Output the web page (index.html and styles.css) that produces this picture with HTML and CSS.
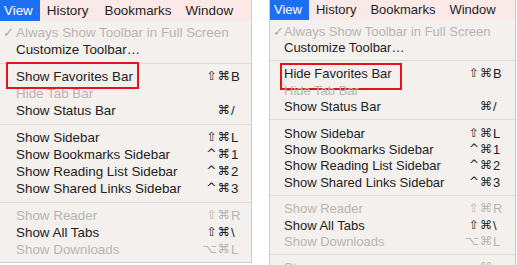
FILE: index.html
```html
<!DOCTYPE html>
<html>
<head>
<meta charset="utf-8">
<link rel="stylesheet" href="styles.css">
</head>
<body>
<div class="page">
  <div class="panel left">
    <div class="menubar">
      <span class="mb-item active">View</span>
      <span class="mb-item">History</span>
      <span class="mb-item">Bookmarks</span>
      <span class="mb-item">Window</span>
    </div>
    <div class="menu">
      <div class="row disabled"><span class="check">✓</span><span class="label">Always Show Toolbar in Full Screen</span></div>
      <div class="row"><span class="check"></span><span class="label">Customize Toolbar…</span></div>
      <div class="sep"></div>
      <div class="row marked"><span class="check"></span><span class="label">Show Favorites Bar</span><span class="sc"><span class="mods">⇧⌘</span><span class="key">B</span></span></div>
      <div class="row disabled"><span class="check"></span><span class="label">Hide Tab Bar</span></div>
      <div class="row"><span class="check"></span><span class="label">Show Status Bar</span><span class="sc"><span class="mods">⌘</span><span class="key">/</span></span></div>
      <div class="sep"></div>
      <div class="row"><span class="check"></span><span class="label">Show Sidebar</span><span class="sc"><span class="mods">⇧⌘</span><span class="key">L</span></span></div>
      <div class="row"><span class="check"></span><span class="label">Show Bookmarks Sidebar</span><span class="sc"><span class="mods">^⌘</span><span class="key">1</span></span></div>
      <div class="row"><span class="check"></span><span class="label">Show Reading List Sidebar</span><span class="sc"><span class="mods">^⌘</span><span class="key">2</span></span></div>
      <div class="row"><span class="check"></span><span class="label">Show Shared Links Sidebar</span><span class="sc"><span class="mods">^⌘</span><span class="key">3</span></span></div>
      <div class="sep"></div>
      <div class="row disabled"><span class="check"></span><span class="label">Show Reader</span><span class="sc"><span class="mods">⇧⌘</span><span class="key">R</span></span></div>
      <div class="row"><span class="check"></span><span class="label">Show All Tabs</span><span class="sc"><span class="mods">⇧⌘</span><span class="key">\</span></span></div>
      <div class="row disabled"><span class="check"></span><span class="label">Show Downloads</span><span class="sc"><span class="mods">⌥⌘</span><span class="key">L</span></span></div>
    </div>
  </div>
  <div class="panel right">
    <div class="menubar">
      <span class="mb-item active">View</span>
      <span class="mb-item">History</span>
      <span class="mb-item">Bookmarks</span>
      <span class="mb-item">Window</span>
    </div>
    <div class="menu">
      <div class="row disabled"><span class="check">✓</span><span class="label">Always Show Toolbar in Full Screen</span></div>
      <div class="row"><span class="check"></span><span class="label">Customize Toolbar…</span></div>
      <div class="sep"></div>
      <div class="row marked"><span class="check"></span><span class="label">Hide Favorites Bar</span><span class="sc"><span class="mods">⇧⌘</span><span class="key">B</span></span></div>
      <div class="row disabled"><span class="check"></span><span class="label">Hide Tab Bar</span></div>
      <div class="row"><span class="check"></span><span class="label">Show Status Bar</span><span class="sc"><span class="mods">⌘</span><span class="key">/</span></span></div>
      <div class="sep"></div>
      <div class="row"><span class="check"></span><span class="label">Show Sidebar</span><span class="sc"><span class="mods">⇧⌘</span><span class="key">L</span></span></div>
      <div class="row"><span class="check"></span><span class="label">Show Bookmarks Sidebar</span><span class="sc"><span class="mods">^⌘</span><span class="key">1</span></span></div>
      <div class="row"><span class="check"></span><span class="label">Show Reading List Sidebar</span><span class="sc"><span class="mods">^⌘</span><span class="key">2</span></span></div>
      <div class="row"><span class="check"></span><span class="label">Show Shared Links Sidebar</span><span class="sc"><span class="mods">^⌘</span><span class="key">3</span></span></div>
      <div class="sep"></div>
      <div class="row disabled"><span class="check"></span><span class="label">Show Reader</span><span class="sc"><span class="mods">⇧⌘</span><span class="key">R</span></span></div>
      <div class="row"><span class="check"></span><span class="label">Show All Tabs</span><span class="sc"><span class="mods">⇧⌘</span><span class="key">\</span></span></div>
      <div class="row disabled"><span class="check"></span><span class="label">Show Downloads</span><span class="sc"><span class="mods">⌥⌘</span><span class="key">L</span></span></div>
      <div class="sep"></div>
      <div class="row disabled"><span class="check"></span><span class="label">Stop</span><span class="sc"><span class="mods">⌘</span><span class="key">.</span></span></div>
    </div>
  </div>
</div>
</body>
</html>
```

FILE: styles.css
```css
html, body {
  margin: 0;
  padding: 0;
  background: #ffffff;
}
body {
  font-family: "Liberation Sans", Arial, "DejaVu Sans", sans-serif;
  color: #222222;
  width: 517px;
  height: 265px;
  overflow: hidden;
}
.page {
  display: flex;
  align-items: flex-start;
  gap: 17px;
  height: 265px;
  overflow: hidden;
}
.panel {
  background: #f4f0ed;
  box-sizing: border-box;
  overflow: hidden;
  font-size: var(--fs);
}
.left {
  --fs: 13.4px;
  --rh: 17px;
  --sep: 10px;
  --mbh: 21px;
  --padl: 16px;
  --padr: 10px;
  width: 252px;
  border-right: 1px solid #cfcbc8;
  border-bottom: 1px solid #cfcbc8;
}
.right {
  --fs: 13px;
  --rh: 16.4px;
  --sep: 10px;
  --mbh: 20px;
  --padl: 14px;
  --padr: 12px;
  width: 247px;
  height: 265px;
  border-left: 1px solid #cfcbc8;
  border-right: 1px solid #cfcbc8;
}
.menubar {
  display: flex;
  height: var(--mbh);
  line-height: var(--mbh);
  background: #fbe9e8;
}
.mb-item {
  padding: 0 7px;
  color: #1e1e1e;
}
.left .mb-item:nth-child(3) { padding-left: 9px; }
.mb-item.active {
  background: #1d6ff2;
  color: #ffffff;
  padding: 0 7px 0 4px;
}
.menu {
  padding: 3px 0 4px;
}
.row {
  position: relative;
  display: flex;
  align-items: center;
  height: var(--rh);
  padding-right: var(--padr);
  white-space: nowrap;
}
.row.disabled {
  color: #b9b5b3;
}
.check {
  width: var(--padl);
  flex: none;
  text-indent: 3px;
  color: #b0acaa;
}
.label {
  flex: 1;
}
.sc {
  display: flex;
  font-family: "DejaVu Sans", "Liberation Sans", sans-serif;
  font-size: 0.92em;
}
.mods {
  text-align: right;
  letter-spacing: 1px;
}
.key {
  width: 10px;
  text-align: left;
  font-family: "Liberation Sans", Arial, sans-serif;
  font-size: 1.08em;
}
.sep {
  height: var(--sep);
  display: flex;
  align-items: center;
}
.sep::before {
  content: "";
  flex: 1;
  height: 1px;
  background: #dfdbd8;
}
.row.marked::after {
  content: "";
  position: absolute;
  top: -6px;
  bottom: -4px;
  left: 6px;
  width: 133px;
  border: 2px solid #e3141b;
  box-sizing: border-box;
}
.right .row.marked::after {
  left: 10px;
  width: 122px;
  top: -3px;
  bottom: -8px;
}
```
